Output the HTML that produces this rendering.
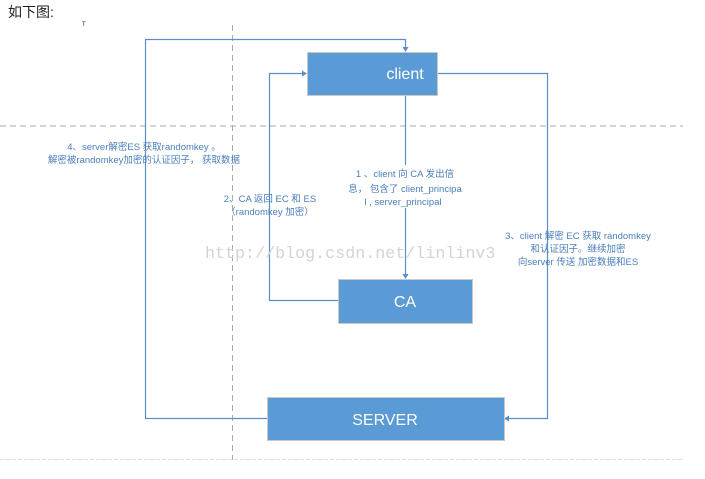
<!DOCTYPE html>
<html><head><meta charset="utf-8"><style>
body{margin:0;background:#fff;width:705px;height:479px;overflow:hidden}
svg{display:block}
.t{font-family:"Liberation Sans","Noto Sans CJK SC",sans-serif;font-size:9.5px;fill:#4a7ebb;text-anchor:middle}
.b{font-family:"Liberation Sans","Noto Sans CJK SC",sans-serif;font-size:16px;fill:#fff;text-anchor:middle}
</style></head><body>
<svg width="705" height="479" xmlns="http://www.w3.org/2000/svg">
<text x="8" y="17" font-family="Liberation Sans,Noto Sans CJK SC,sans-serif" font-size="14" fill="#222">如下图:</text>
<text x="82" y="26" font-size="6" fill="#222" font-family="Liberation Sans,sans-serif">T</text>
<line x1="0" y1="126" x2="683" y2="126" stroke="#aaa" stroke-dasharray="6,4"/>
<line x1="0" y1="459.5" x2="683" y2="459.5" stroke="#ddd" stroke-dasharray="4,2"/>
<line x1="232.5" y1="25" x2="232.5" y2="460" stroke="#aaa" stroke-dasharray="6,4"/>
<g stroke="#5b8ec9" fill="none" stroke-width="1.2">
<polyline points="267,418.5 145.5,418.5 145.5,39.5 405.5,39.5 405.5,50"/>
<polyline points="338,300.5 269.5,300.5 269.5,73.5 305,73.5"/>
<polyline points="437,73.5 547.5,73.5 547.5,418.5 506,418.5"/>
<line x1="405.5" y1="96" x2="405.5" y2="165"/>
<line x1="405.5" y1="208" x2="405.5" y2="277"/>
</g>
<g fill="#5b8ec9">
<path d="M402.5,47 L408.5,47 L405.5,52z"/>
<path d="M302,70.5 L302,76.5 L307,73.5z"/>
<path d="M402.5,274 L408.5,274 L405.5,279z"/>
<path d="M509,415.5 L509,421.5 L504,418.5z"/>
</g>
<g fill="#5b9bd5" stroke="#c8c8c8" stroke-width="1">
<rect x="307.5" y="52.5" width="130" height="43"/>
<rect x="338.5" y="279.5" width="134" height="44"/>
<rect x="267.5" y="397.5" width="237" height="43"/>
</g>
<text class="b" x="405" y="79">client</text>
<text class="b" x="405" y="307">CA</text>
<text class="b" x="385" y="425">SERVER</text>
<text x="205" y="258" font-family="Liberation Mono,monospace" font-size="16.7" fill="#d4d4d4">http://blog.csdn.net/linlinv3</text>
<text class="t" x="144" y="150">4、server解密ES 获取randomkey 。</text>
<text class="t" x="144" y="163">解密被randomkey加密的认证因子， 获取数据</text>
<text class="t" x="270" y="202">2、CA 返回 EC 和 ES</text>
<text class="t" x="270" y="215">（randomkey 加密）</text>
<text class="t" x="405" y="177">1 、client 向 CA 发出信</text>
<text class="t" x="405" y="192">息， 包含了 client_principa</text>
<text class="t" x="403" y="205">l   , server_principal</text>
<text class="t" x="578" y="239">3、client 解密 EC 获取 randomkey</text>
<text class="t" x="578" y="252">和认证因子。继续加密</text>
<text class="t" x="578" y="265">向server 传送 加密数据和ES</text>
</svg>
</body></html>
